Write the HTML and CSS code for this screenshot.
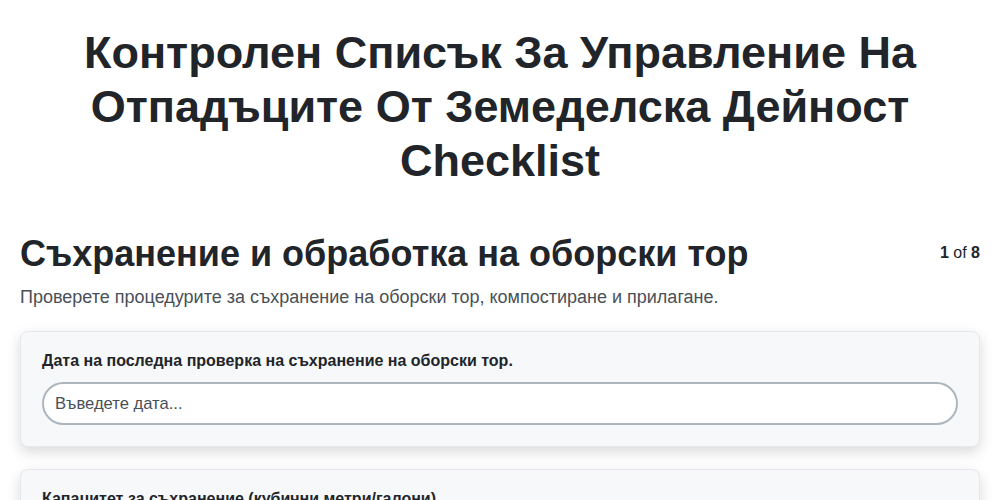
FILE: index.html
```html
<!DOCTYPE html>
<html lang="bg">
<head>
<meta charset="utf-8">
<link rel="stylesheet" href="styles.css">
</head>
<body>
<div class="page">
  <h1 class="title">Контролен Списък За Управление На Отпадъците От Земеделска Дейност Checklist</h1>
  <div class="section-head">
    <h2 class="section-title">Съхранение и обработка на оборски тор</h2>
    <div class="counter"><b>1</b> of <b>8</b></div>
  </div>
  <p class="section-desc">Проверете процедурите за съхранение на оборски тор, компостиране и прилагане.</p>
  <div class="card">
    <label class="field-label">Дата на последна проверка на съхранение на оборски тор.</label>
    <input class="field-input" type="text" placeholder="Въведете дата...">
  </div>
  <div class="card">
    <label class="field-label">Капацитет за съхранение (кубични метри/галони)</label>
    <input class="field-input" type="text" placeholder="Въведете стойност...">
  </div>
</div>
</body>
</html>
```

FILE: styles.css
```css
* { box-sizing: border-box; }
html, body { margin: 0; padding: 0; background: #fff; }
body {
  font-family: "Liberation Sans", Arial, sans-serif;
  color: #212529;
}
.page {
  padding: 20px 20px;
}
.title {
  margin: 6px 40px 44px;
  text-align: center;
  font-size: 45px;
  line-height: 54px;
  font-weight: 700;
}
.section-head {
  display: flex;
  justify-content: space-between;
  align-items: flex-start;
}
.section-title {
  margin: 0;
  font-size: 36px;
  line-height: 44px;
  font-weight: 700;
}
.counter {
  font-size: 16px;
  line-height: 20px;
  padding-top: 11px;
  color: #212529;
}
.section-desc {
  margin: 9px 0 22px;
  font-size: 18px;
  line-height: 24px;
  color: #495057;
}
.card {
  background: #f7f8fa;
  border: 1px solid #e6e8ec;
  border-radius: 8px;
  box-shadow: 0 5px 14px rgba(0,0,0,0.15);
  padding: 19px 21px 21px;
  margin-bottom: 22px;
  display: flex;
  flex-direction: column;
  gap: 11px;
}
.field-label {
  font-size: 16px;
  line-height: 20px;
  font-weight: 700;
  color: #212529;
}
.field-input {
  height: 43px;
  border: 2px solid #adb5bd;
  border-radius: 22px;
  background: #fff;
  padding: 0 11px;
  font-family: "Liberation Sans", Arial, sans-serif;
  font-size: 16.6px;
  color: #212529;
}
.field-input::placeholder { color: #495057; }
```
